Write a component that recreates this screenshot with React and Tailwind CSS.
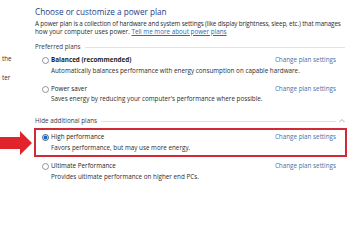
import React from 'react';

const font = { fontFamily: '"Open Sans", "Noto Sans", "Liberation Sans", sans-serif' };

function Radio({ checked }) {
  return (
    <svg width="7" height="7" viewBox="0 0 7 7" className="shrink-0">
      <circle cx="3.5" cy="3.5" r="3" fill="#fff" stroke={checked ? '#1b3560' : '#7a7a7a'} strokeWidth="0.8" />
      {checked ? <circle cx="3.5" cy="3.5" r="1.9" fill="#1766c2" /> : null}
    </svg>
  );
}

function Plan({ name, desc, bold, checked, descGap = 'mt-[3px]', className = '' }) {
  return (
    <div className={className}>
      <div className="flex h-[8px] items-center">
        <div className="flex w-[16px] justify-end pr-[2px]">
          <Radio checked={checked} />
        </div>
        <span className={bold ? 'font-bold text-[#1f1f1f]' : 'text-[#262626]'}>{name}</span>
        <span className="ml-auto text-[#3f73ad]">Change plan settings</span>
      </div>
      <div className={`${descGap} h-[8px] whitespace-nowrap pl-[16px] leading-[8px] text-[#2e2e2e]`}>{desc}</div>
    </div>
  );
}

function GroupHeader({ label, chevron }) {
  return (
    <div className="flex h-[8px] items-center">
      <span className="text-[#3a3a3a]">{label}</span>
      <div className="ml-[4px] h-px flex-1 bg-[#e2e2e2]" />
      {chevron ? (
        <svg width="8" height="6" viewBox="0 0 8 6" className="ml-[2px] mr-[4px]">
          <path d="M1.5 4 L4 1.5 L6.5 4" fill="none" stroke="#9a9a9a" strokeWidth="0.8" />
        </svg>
      ) : (
        <div className="w-[5px]" />
      )}
    </div>
  );
}

export default function App() {
  return (
    <div className="relative flex h-[250px] w-[350px] overflow-hidden bg-white text-[6.3px] leading-[8px]" style={font}>
      <div className="w-[35px] shrink-0 text-[#333]">
        <div className="mt-[55px] h-[8px] pl-[2px]">the</div>
        <div className="mt-[11px] h-[8px] pl-[2px]">ter</div>
      </div>

      <div className="flex min-w-0 flex-1 flex-col">
        <div className="mt-[7px] h-[10px] whitespace-nowrap text-[8.2px] leading-[10px] text-[#1e3d8a]">
          Choose or customize a power plan
        </div>
        <div className="mt-[3px] h-[8px] whitespace-nowrap tracking-[-0.14px] text-[#2e2e2e]">
          A power plan is a collection of hardware and system settings (like display brightness, sleep, etc.) that manages
        </div>
        <div className="h-[8px] whitespace-nowrap text-[#2e2e2e]">
          how your computer uses power. <span className="text-[#2c6db5] underline">Tell me more about power plans</span>
        </div>

        <div className="mt-[7px]">
          <GroupHeader label="Preferred plans" />
        </div>
        <Plan
          className="mt-[5px] pr-[14px]"
          bold
          name="Balanced (recommended)"
          desc="Automatically balances performance with energy consumption on capable hardware."
        />
        <Plan
          className="mt-[10px] pr-[14px]"
          name="Power saver"
          descGap="mt-[2px]"
          desc="Saves energy by reducing your computer's performance where possible."
        />

        <div className="mt-[14px]">
          <GroupHeader label="Hide additional plans" chevron />
        </div>
        <div className="ml-[-1px] mt-[3px] w-[313px] border-2 border-[#cf2a36] pb-[3px] pr-[9px] pt-[3px]">
          <div className="-ml-[1px]">
            <Plan
              checked
              name="High performance"
              desc="Favors performance, but may use more energy."
            />
          </div>
        </div>
        <Plan
          className="mt-[5px] pr-[14px]"
          name="Ultimate Performance"
          desc="Provides ultimate performance on higher end PCs."
        />
      </div>

      <svg width="34" height="28" viewBox="0 0 34 28" className="absolute left-0 top-[129px]">
        <path d="M0 8 L20 8 L20 2 L32 14 L20 26 L20 20 L0 20 Z" fill="#e1242b" />
      </svg>
    </div>
  );
}
